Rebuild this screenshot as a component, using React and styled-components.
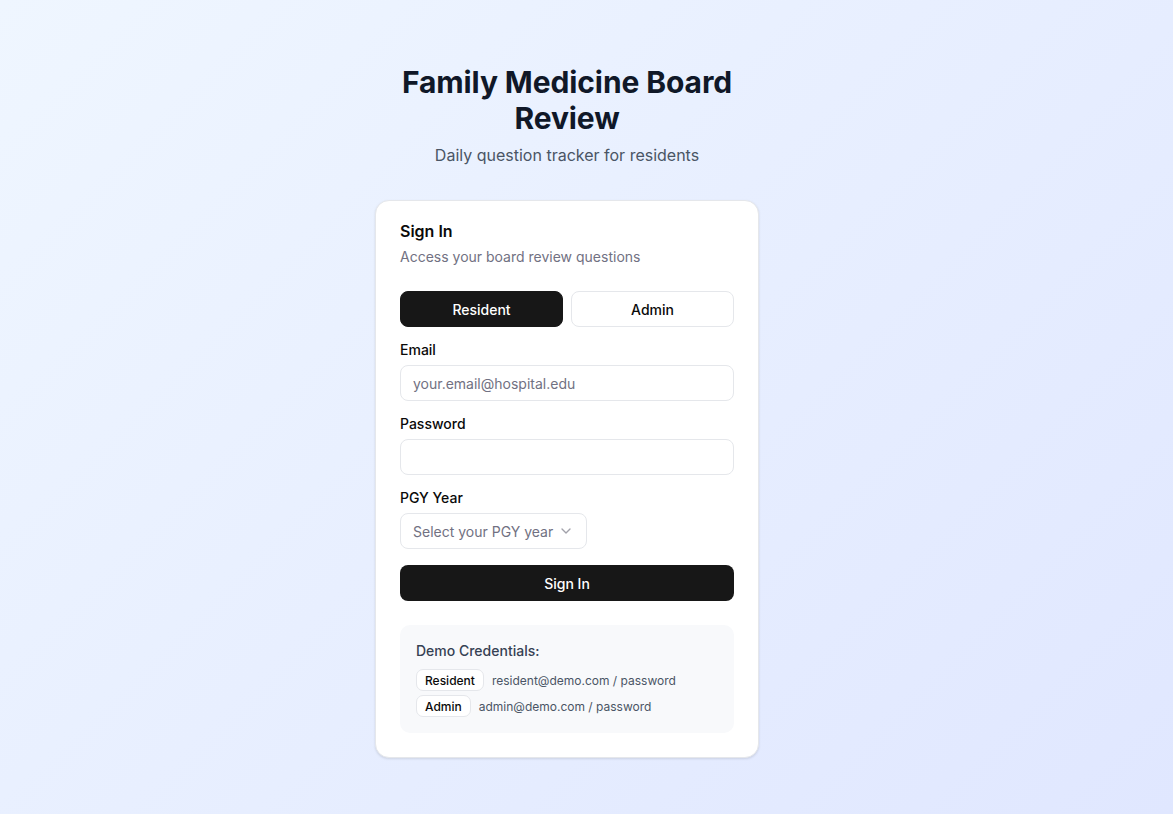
import React from "react";
import styled, { createGlobalStyle } from "styled-components";

const Global = createGlobalStyle`
  html, body { margin: 0; padding: 0; }
  body {
    font-family: Inter, "Noto Sans", sans-serif;
    min-height: 100vh;
    background: linear-gradient(135deg, #eff6ff 0%, #e0e7ff 100%);
    color: #0a0a0a;
  }
  * { box-sizing: border-box; }
`;

const Page = styled.div`
  min-height: 100vh;
  display: flex;
  justify-content: center;
  padding: 64px 55px 40px 16px;
`;

const Column = styled.div`
  width: 384px;
  display: flex;
  flex-direction: column;
  gap: 33px;
`;

const Header = styled.header`
  text-align: center;
  display: flex;
  flex-direction: column;
  gap: 7px;
`;

const Title = styled.h1`
  margin: 0;
  font-size: 30px;
  line-height: 36px;
  font-weight: 700;
  color: #101828;
  letter-spacing: -0.1px;
`;

const Subtitle = styled.p`
  margin: 0;
  font-size: 16px;
  line-height: 24px;
  color: #4a5565;
`;

const Card = styled.div`
  background: #fff;
  border: 1px solid #e5e7eb;
  border-radius: 14px;
  box-shadow: 0 1px 3px rgba(0,0,0,0.08), 0 1px 2px rgba(0,0,0,0.04);
  padding: 22px 24px 24px;
  display: flex;
  flex-direction: column;
`;

const CardTitle = styled.h2`
  margin: 0;
  font-size: 16px;
  line-height: 16px;
  font-weight: 600;
  color: #0a0a0a;
`;

const CardDesc = styled.p`
  margin: 8px 0 0;
  font-size: 14px;
  line-height: 20px;
  color: #717182;
`;

const Form = styled.form`
  margin-top: 24px;
  display: flex;
  flex-direction: column;
  gap: 16px;
`;

const Tabs = styled.div`
  display: grid;
  grid-template-columns: 1fr 1fr;
  gap: 8px;
`;

const TabButton = styled.button`
  height: 36px;
  border-radius: 8px;
  font-family: inherit;
  font-size: 14px;
  font-weight: 500;
  cursor: pointer;
  border: 1px solid ${p => (p.$active ? "#171717" : "#e5e7eb")};
  background: ${p => (p.$active ? "#171717" : "#fff")};
  color: ${p => (p.$active ? "#fff" : "#0a0a0a")};
`;

const Field = styled.div`
  display: flex;
  flex-direction: column;
  gap: 8px;
`;

const Label = styled.label`
  font-size: 14px;
  line-height: 14px;
  font-weight: 500;
  color: #0a0a0a;
`;

const Input = styled.input`
  height: 36px;
  width: 100%;
  border: 1px solid #e5e7eb;
  border-radius: 8px;
  background: #fff;
  padding: 0 12px;
  font-family: inherit;
  font-size: 14px;
  color: #0a0a0a;
  outline: none;
  &::placeholder { color: #717182; }
`;

const SelectBox = styled.button`
  height: 36px;
  width: 187px;
  border: 1px solid #e5e7eb;
  border-radius: 8px;
  background: #fff;
  padding: 0 12px;
  display: flex;
  align-items: center;
  justify-content: space-between;
  font-family: inherit;
  font-size: 14px;
  color: #717182;
  cursor: pointer;
`;

const SubmitButton = styled.button`
  height: 36px;
  border: none;
  border-radius: 8px;
  background: #171717;
  color: #fff;
  font-family: inherit;
  font-size: 14px;
  font-weight: 500;
  cursor: pointer;
`;

const DemoBox = styled.div`
  margin-top: 24px;
  background: #f8f9fb;
  border-radius: 10px;
  padding: 16px;
  display: flex;
  flex-direction: column;
  gap: 4px;
`;

const DemoTitle = styled.p`
  margin: 0 0 4px;
  font-size: 14px;
  line-height: 20px;
  font-weight: 500;
  color: #364153;
`;

const DemoRow = styled.div`
  display: flex;
  align-items: center;
  gap: 8px;
  font-size: 12px;
  color: #4a5565;
`;

const Badge = styled.span`
  display: inline-flex;
  align-items: center;
  height: 22px;
  padding: 0 8px;
  border: 1px solid #e5e7eb;
  border-radius: 7px;
  background: #fff;
  font-size: 12px;
  font-weight: 500;
  color: #0a0a0a;
`;

const Chevron = () => (
  <svg width="16" height="16" viewBox="0 0 24 24" fill="none" stroke="#a1a1aa" strokeWidth="2" strokeLinecap="round" strokeLinejoin="round">
    <path d="m6 9 6 6 6-6" />
  </svg>
);

export default function App() {
  return (
    <>
      <Global />
      <Page>
        <Column>
          <Header>
            <Title>Family Medicine Board Review</Title>
            <Subtitle>Daily question tracker for residents</Subtitle>
          </Header>
          <Card>
            <CardTitle>Sign In</CardTitle>
            <CardDesc>Access your board review questions</CardDesc>
            <Form onSubmit={e => e.preventDefault()}>
              <Tabs>
                <TabButton type="button" $active>Resident</TabButton>
                <TabButton type="button">Admin</TabButton>
              </Tabs>
              <Field>
                <Label>Email</Label>
                <Input type="email" placeholder="your.email@hospital.edu" />
              </Field>
              <Field>
                <Label>Password</Label>
                <Input type="password" />
              </Field>
              <Field>
                <Label>PGY Year</Label>
                <SelectBox type="button">
                  <span>Select your PGY year</span>
                  <Chevron />
                </SelectBox>
              </Field>
              <SubmitButton type="submit">Sign In</SubmitButton>
            </Form>
            <DemoBox>
              <DemoTitle>Demo Credentials:</DemoTitle>
              <DemoRow>
                <Badge>Resident</Badge>
                <span>resident@demo.com / password</span>
              </DemoRow>
              <DemoRow>
                <Badge>Admin</Badge>
                <span>admin@demo.com / password</span>
              </DemoRow>
            </DemoBox>
          </Card>
        </Column>
      </Page>
    </>
  );
}
